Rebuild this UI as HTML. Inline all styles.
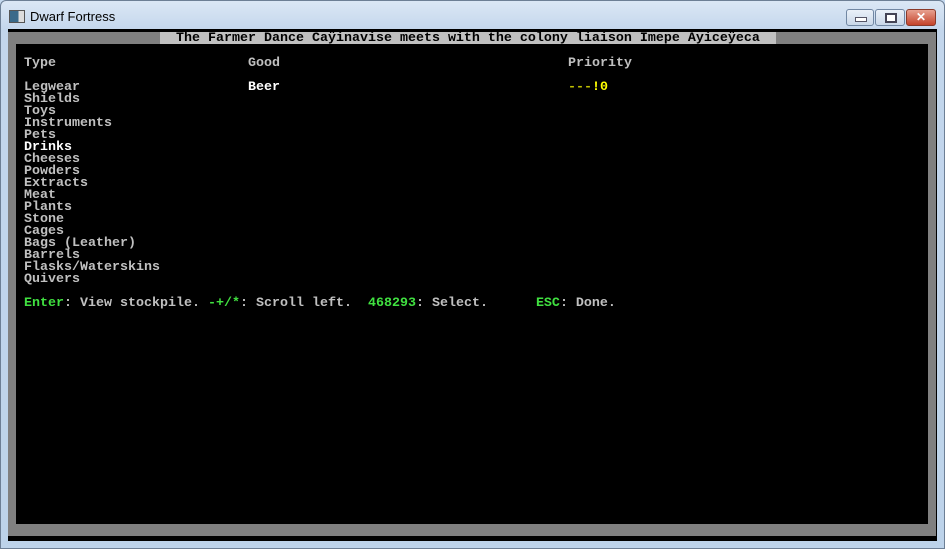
<!DOCTYPE html>
<html><head><meta charset="utf-8"><style>
html,body{margin:0;padding:0;width:945px;height:549px;overflow:hidden;background:#c5d9ef;}
.frame{position:absolute;left:0;top:0;width:943px;height:547px;border:1px solid #6d7f95;border-radius:6px 6px 0 0;background:linear-gradient(#dbe7f5,#c3d6ec 30px,#bdd3ea);}
.title{position:absolute;left:30px;top:9px;font:13px "Liberation Sans",sans-serif;color:#000;}
.icon{position:absolute;left:9px;top:10px;width:14px;height:11px;border:1px solid #555;background:linear-gradient(90deg,#3a6a8a 60%,#ddd 60%);}
.btn{position:absolute;top:9px;height:15px;border:1px solid #7187a3;border-radius:3px;background:linear-gradient(#eaf1f9,#c9d7e8);}
.client{position:absolute;left:8px;top:29px;width:929px;height:512px;background:#000;}
.gray{position:absolute;left:8px;top:32px;width:928px;height:504px;background:#808080;}
.inner{position:absolute;left:16px;top:44px;width:912px;height:480px;background:#000;}
.t{position:absolute;font:bold 13.33px/12px "Liberation Mono",monospace;white-space:pre;color:#c0c0c0;}
.w{color:#fff}.y{color:#ffff00}.dy{color:#c0c000}.g{color:#40e040}
</style></head><body>
<div class="frame"></div>
<div class="icon"></div>
<div class="title">Dwarf Fortress</div>
<div class="btn" style="left:846px;width:26px"><div style="position:absolute;left:8px;top:7px;width:10px;height:3px;background:#fff;border:1px solid #556"></div></div>
<div class="btn" style="left:875px;width:28px"><div style="position:absolute;left:9px;top:3px;width:8px;height:6px;border:2px solid #445;background:#fff"></div></div>
<div class="btn" style="left:906px;width:28px;background:linear-gradient(#e8a190,#c4432a);border-color:#8a3a2a;color:#fff;font:bold 12px/15px 'Liberation Sans',sans-serif;text-align:center">✕</div>
<div class="client"></div>
<div class="gray"></div>
<div class="inner"></div>
<div style="position:absolute;left:160px;top:32px;width:616px;height:12px;background:#c0c0c0"></div>
<div class="t" style="left:176px;top:33px;color:#000">The Farmer Dance Caÿinavise meets with the colony liaison Imepe Ayiceÿeca</div>
<div class="t" style="left:24px;top:58px">Type</div>
<div class="t" style="left:248px;top:58px">Good</div>
<div class="t" style="left:568px;top:58px">Priority</div>
<div class="t" style="left:24px;top:82px">Legwear
Shields
Toys
Instruments
Pets
<span class="w">Drinks</span>
Cheeses
Powders
Extracts
Meat
Plants
Stone
Cages
Bags (Leather)
Barrels
Flasks/Waterskins
Quivers</div>
<div class="t w" style="left:248px;top:82px">Beer</div>
<div class="t" style="left:568px;top:82px"><span class="dy">---</span><span class="y">!0</span></div>
<div class="t" style="left:24px;top:298px"><span class="g">Enter</span>: View stockpile. <span class="g">-+/*</span>: Scroll left.  <span class="g">468293</span>: Select.      <span class="g">ESC</span>: Done.</div>
</body></html>
